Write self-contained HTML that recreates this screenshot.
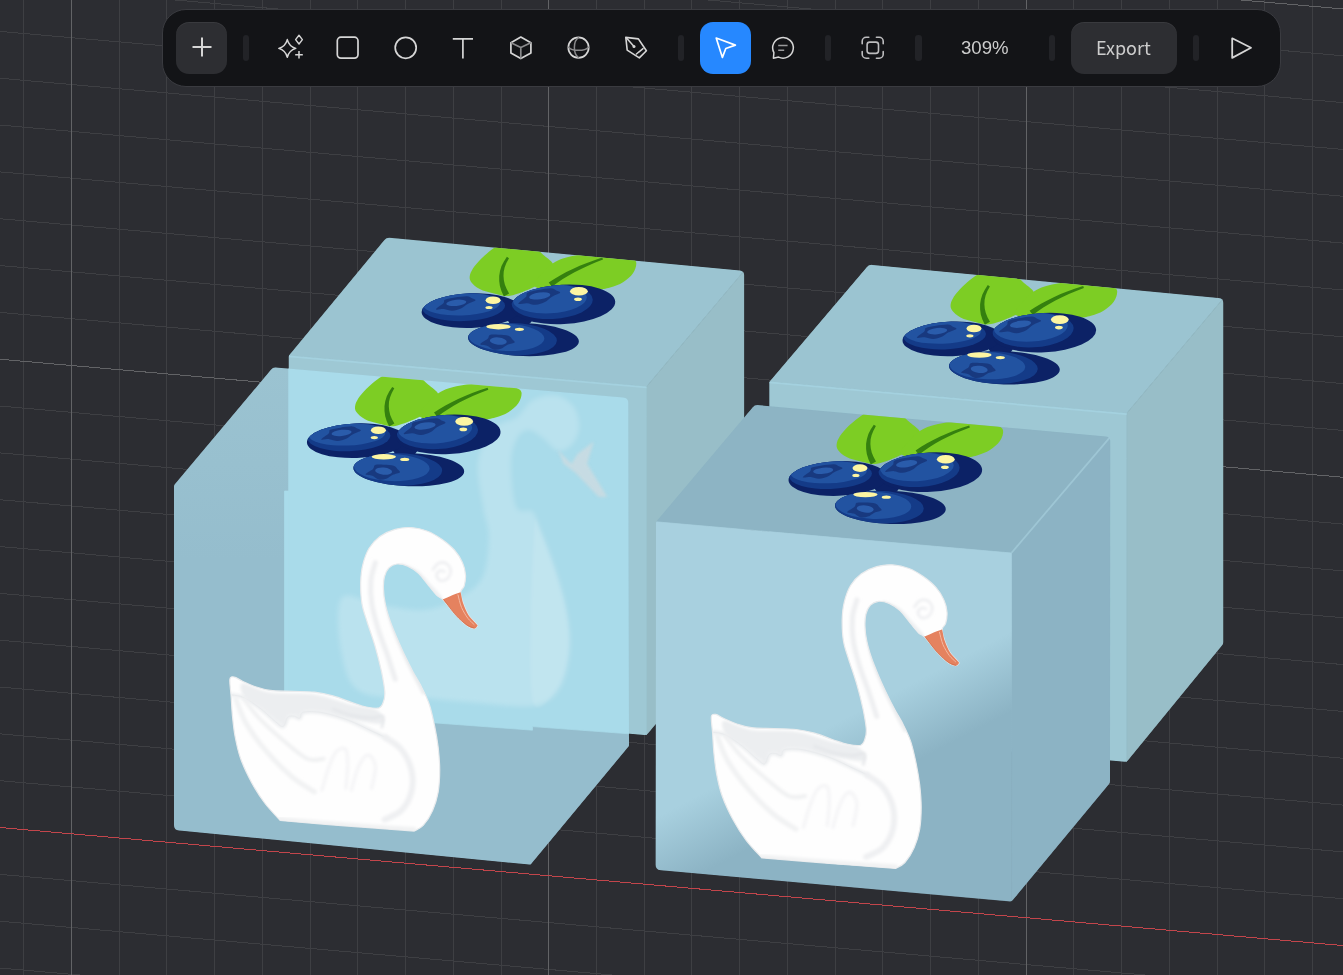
<!DOCTYPE html>
<html><head><meta charset="utf-8"><title>Spline</title>
<style>
html,body{margin:0;padding:0;background:#2c2d32;overflow:hidden}
body{width:1343px;height:975px;position:relative;font-family:"Liberation Sans","Noto Sans CJK SC",sans-serif}
#bg{position:absolute;left:0;top:0;display:block}
#tb{position:absolute;left:162px;top:9px;width:1117px;height:76px;background:#131417;border:1px solid #3a3b40;border-radius:24px}
#tb .btn{position:absolute;top:12px;height:52px;border-radius:13px;background:#2d2e32;box-shadow:inset 0 1px 0 rgba(255,255,255,.06)}
#tb .dv{position:absolute;top:25px;width:6px;height:26px;border-radius:3px;background:#222327}
#tb svg{position:absolute;left:-163px;top:-10px;overflow:visible}
#tb .txt{position:absolute;will-change:transform;color:#cdcdcd;white-space:nowrap;line-height:20px}
</style></head><body>
<svg id="bg" width="1343" height="975" viewBox="0 0 1343 975">
<rect width="1343" height="975" fill="#2c2d32"/>
<g stroke="#3e3f43" stroke-width="1" fill="none" shape-rendering="crispEdges"><path d="M23.77 0V975"/><path d="M119.23 0V975"/><path d="M166.96 0V975"/><path d="M214.69 0V975"/><path d="M262.42 0V975"/><path d="M310.15 0V975"/><path d="M357.88 0V975"/><path d="M405.61 0V975"/><path d="M453.34 0V975"/><path d="M501.07 0V975"/><path d="M596.53 0V975"/><path d="M644.26 0V975"/><path d="M691.99 0V975"/><path d="M739.72 0V975"/><path d="M787.45 0V975"/><path d="M835.18 0V975"/><path d="M882.91 0V975"/><path d="M930.64 0V975"/><path d="M978.37 0V975"/><path d="M1073.83 0V975"/><path d="M1121.56 0V975"/><path d="M1169.29 0V975"/><path d="M1217.02 0V975"/><path d="M1264.75 0V975"/><path d="M1312.48 0V975"/><path d="M0 -202.74L1343 -84.70"/><path d="M0 -155.91L1343 -37.87"/><path d="M0 -62.25L1343 55.79"/><path d="M0 -15.42L1343 102.62"/><path d="M0 31.41L1343 149.45"/><path d="M0 78.24L1343 196.28"/><path d="M0 125.07L1343 243.11"/><path d="M0 171.90L1343 289.94"/><path d="M0 218.73L1343 336.77"/><path d="M0 265.56L1343 383.60"/><path d="M0 312.39L1343 430.43"/><path d="M0 406.05L1343 524.09"/><path d="M0 452.88L1343 570.92"/><path d="M0 499.71L1343 617.75"/><path d="M0 546.54L1343 664.58"/><path d="M0 593.37L1343 711.41"/><path d="M0 640.20L1343 758.24"/><path d="M0 687.03L1343 805.07"/><path d="M0 733.86L1343 851.90"/><path d="M0 780.69L1343 898.73"/><path d="M0 874.35L1343 992.39"/><path d="M0 921.18L1343 1039.22"/><path d="M0 968.01L1343 1086.05"/><path d="M0 1014.84L1343 1132.88"/><path d="M0 1061.67L1343 1179.71"/></g><g stroke="#626366" stroke-width="1" fill="none" shape-rendering="crispEdges"><path d="M71.50 0V975"/><path d="M548.80 0V975"/><path d="M1026.10 0V975"/><path d="M0 -109.08L1343 8.96"/><path d="M0 359.22L1343 477.26"/></g><path d="M0 827.52L1343 945.56" stroke="#c2454b" stroke-width="1" fill="none" shape-rendering="crispEdges"/>
<defs>
<linearGradient id="gfr" gradientUnits="userSpaceOnUse" x1="817" y1="733" x2="850" y2="796">
<stop offset="0" stop-color="#a8d0df"/><stop offset="1" stop-color="#8cb3c4"/></linearGradient>
</defs>
<clipPath id="cBL"><path d="M288.7 357.2Q288.7 355.7 289.7 354.5L384.3 240.1Q386.5 237.4 390.0 237.7L739.7 270.4Q744.2 270.8 744.2 275.3L744.2 616.0Q744.2 618.0 742.9 619.5L647.8 733.8Q646.5 735.3 644.5 735.1L293.7 704.4Q288.7 704.0 288.7 699.0Z"/></clipPath><g clip-path="url(#cBL)"><polygon points="288.7,355.7 386.5,237.4 744.2,270.8 646.5,386.7" fill="#9bc4d1" stroke="#9bc4d1" stroke-width="0.7" stroke-linejoin="round" /><polygon points="646.5,386.7 744.2,270.8 744.2,618.0 646.5,735.3" fill="#98bec8" stroke="#98bec8" stroke-width="0.7" stroke-linejoin="round" /><polygon points="288.7,355.7 646.5,386.7 646.5,735.3 288.7,704.0" fill="#9ec8d4" stroke="#9ec8d4" stroke-width="0.7" stroke-linejoin="round" /><path d="M288.7 356.3L646.5 387.3" stroke="#a4d1df" stroke-width="1.8" fill="none"/></g>
<clipPath id="cBR"><path d="M769.3 383.3Q769.3 381.8 770.3 380.7L866.7 267.3Q869.0 264.6 872.5 264.9L1218.8 298.1Q1223.3 298.5 1223.3 303.0L1223.3 642.0Q1223.3 644.0 1222.0 645.5L1127.9 760.5Q1126.6 762.0 1124.6 761.8L774.3 730.4Q769.3 730.0 769.3 725.0Z"/></clipPath><g clip-path="url(#cBR)"><polygon points="769.3,381.8 869.0,264.6 1223.3,298.5 1126.6,413.5" fill="#9bc4d1" stroke="#9bc4d1" stroke-width="0.7" stroke-linejoin="round" /><polygon points="1126.6,413.5 1223.3,298.5 1223.3,644.0 1126.6,762.0" fill="#98bec8" stroke="#98bec8" stroke-width="0.7" stroke-linejoin="round" /><polygon points="769.3,381.8 1126.6,413.5 1126.6,762.0 769.3,730.0" fill="#9ec8d4" stroke="#9ec8d4" stroke-width="0.7" stroke-linejoin="round" /><path d="M769.3 382.4L1126.6 414.1" stroke="#a4d1df" stroke-width="1.8" fill="none"/></g>
<clipPath id="cFR"><path d="M656.0 523.3Q656.0 521.8 657.0 520.7L752.5 407.5Q754.8 404.8 758.3 405.1L1105.8 436.4Q1110.3 436.8 1110.3 441.3L1110.0 781.0Q1110.0 783.0 1108.7 784.5L1012.9 900.1Q1011.6 901.6 1009.6 901.4L660.6 870.2Q655.6 869.8 655.6 864.8Z"/></clipPath><g clip-path="url(#cFR)"><polygon points="656.0,521.8 754.8,404.8 1110.3,436.8 1011.4,553.0" fill="#8db4c4" stroke="#8db4c4" stroke-width="0.7" stroke-linejoin="round" /><polygon points="1011.4,553.0 1110.3,436.8 1110.0,783.0 1011.6,901.6" fill="#8cb3c4" stroke="#8cb3c4" stroke-width="0.7" stroke-linejoin="round" /><polygon points="656.0,521.8 1011.4,553.0 1011.6,901.6 655.6,869.8" fill="url(#gfr)" stroke="url(#gfr)" stroke-width="0.7" stroke-linejoin="round" /></g>
<clipPath id="cFL"><path d="M174.0 486.5Q174.0 485.0 175.0 483.9L271.1 369.6Q273.0 367.3 276.0 367.6L623.3 397.4Q628.3 397.8 628.3 402.8L629.0 745.0Q629.0 746.0 628.4 746.8L531.1 863.9Q530.5 864.7 529.5 864.6L179.0 830.5Q174.0 830.0 174.0 825.0Z"/></clipPath>
<g clip-path="url(#cFL)">
<linearGradient id="gfl" gradientUnits="userSpaceOnUse" x1="0" y1="368" x2="0" y2="560"><stop offset="0" stop-color="#9bc3d1"/><stop offset="1" stop-color="#95bdcd"/></linearGradient>
<polygon points="174.0,485.0 273.0,367.3 628.3,397.8 629.0,746.0 530.5,864.7 174.0,830.0" fill="url(#gfl)" stroke="url(#gfl)" stroke-width="0.7" stroke-linejoin="round" />
<polygon points="288.7,340.0 660.0,340.0 660.0,736.5 646.5,735.3 629.0,733.8 532.5,726.6 532.5,730.2 288.7,712.0" fill="#a9dbea" stroke="#a9dbea" stroke-width="0.7" stroke-linejoin="round" />
<polygon points="284.5,491.0 289.0,491.0 289.0,712.0 284.5,711.7" fill="#a9dbea" stroke="#a9dbea" stroke-width="0.7" stroke-linejoin="round" />
</g>
<defs><g id="bb"><path d="M510.1 295.8C503.2 296.9 499.1 294.7 494.0 293.6C488.9 292.5 483.5 291.1 479.7 289.1C475.9 287.2 472.7 284.4 471.1 282.0C469.5 279.6 469.4 277.5 470.0 274.8C470.6 272.2 472.4 269.0 474.7 265.9C477.0 262.8 480.4 259.4 483.6 256.4C486.8 253.5 490.5 250.3 494.0 248.0C497.5 245.7 500.5 243.8 504.7 242.7C508.9 241.6 514.2 240.8 519.0 241.4C523.8 242.0 529.3 244.1 533.3 246.3C537.3 248.5 539.9 251.7 543.1 254.7C546.4 257.6 551.6 260.6 553.0 264.1C554.3 267.6 554.2 272.0 551.2 275.7C548.2 279.5 541.9 283.1 535.1 286.5C528.2 289.8 516.9 294.6 510.1 295.8Z" fill="#7dcd24"/><path d="M535.1 286.8C530.5 283.5 540.2 276.1 543.1 272.2C546.1 268.2 549.5 265.6 553.0 263.2C556.4 260.9 559.2 259.7 563.7 258.2C568.1 256.8 573.8 255.5 579.8 254.7C585.7 253.8 593.2 253.0 599.4 252.9C605.7 252.7 612.2 253.2 617.3 253.9C622.4 254.7 627.0 256.1 630.2 257.5C633.3 258.9 635.8 259.9 636.2 262.5C636.7 265.1 635.2 270.0 633.0 273.2C630.8 276.5 626.8 279.8 623.0 282.2C619.2 284.6 614.7 286.2 610.1 287.5C605.6 288.8 602.4 289.3 595.8 290.0C589.3 290.8 581.0 292.4 570.8 291.8C560.7 291.3 539.7 290.1 535.1 286.8Z" fill="#7dcd24"/><path d="M506.9 256.8L503.9 261.4L501.5 266.1L500.0 271.0L499.2 275.9L499.2 281.0L499.9 286.1L501.5 291.3L503.9 296.5L509.1 293.5L506.7 289.1L504.9 284.8L503.9 280.4L503.5 276.1L503.7 271.7L504.7 267.3L506.5 262.8L509.0 258.2 Z" fill="#35800f"/><path d="M602.3 257.6L594.4 260.2L586.9 262.9L579.7 265.8L572.8 268.9L566.3 272.1L560.1 275.4L554.2 278.9L548.7 282.5L551.9 286.8L557.0 283.0L562.4 279.3L568.3 275.7L574.5 272.2L581.1 268.9L588.0 265.7L595.3 262.6L603.0 259.6 Z" fill="#35800f"/><ellipse cx="519.9" cy="318.6" rx="12.5" ry="8.0" fill="#0c2266" /><clipPath id="bc1"><ellipse cx="471.1" cy="310.6" rx="49.5" ry="17.3" fill="#0c2266" transform="rotate(-2 471.1 310.6)" /></clipPath><ellipse cx="471.1" cy="310.6" rx="49.5" ry="17.3" fill="#0c2266" transform="rotate(-2 471.1 310.6)" /><g clip-path="url(#bc1)"><ellipse cx="463.6" cy="307.0" rx="41.5" ry="14.1" fill="#143b88" transform="rotate(-2 463.6 307.0)" /><ellipse cx="461.8" cy="304.3" rx="38.2" ry="11.1" fill="#2253a1" transform="rotate(-2 461.8 304.3)" /></g><g transform="rotate(-6 455.6 304.0)"><path d="M435.5 307.2C435.5 306.2 441.8 303.5 443.5 302.0C445.2 300.6 443.5 299.3 445.5 298.6C447.5 297.8 451.9 297.7 455.6 297.5C459.3 297.4 464.8 297.1 467.6 297.5C470.4 298.0 471.1 299.3 472.5 300.1C473.8 301.0 476.5 301.8 475.7 302.7C474.9 303.5 470.2 304.2 467.6 305.3C465.1 306.3 463.1 308.3 460.4 309.1C457.7 310.0 454.4 310.6 451.5 310.4C448.7 310.2 446.2 308.4 443.5 307.8C440.8 307.3 435.5 308.2 435.5 307.2Z" fill="#17367b" opacity="0.9"/><ellipse cx="456.4" cy="302.9" rx="10.1" ry="3.1" fill="#2a5cab"/></g><ellipse cx="493.1" cy="300.2" rx="7.5" ry="3.8" fill="#fdf5a2" /><ellipse cx="489.0" cy="307.5" rx="3.6" ry="1.6" fill="#fdf5a2" /><clipPath id="bc2"><ellipse cx="563.1" cy="304.3" rx="52.2" ry="19.7" fill="#0c2266" transform="rotate(-3 563.1 304.3)" /></clipPath><ellipse cx="563.1" cy="304.3" rx="52.2" ry="19.7" fill="#0c2266" transform="rotate(-3 563.1 304.3)" /><g clip-path="url(#bc2)"><ellipse cx="552.1" cy="301.7" rx="40.7" ry="17.3" fill="#143b88" transform="rotate(-3 552.1 301.7)" /><ellipse cx="549.9" cy="299.0" rx="37.0" ry="14.3" fill="#2253a1" transform="rotate(-3 549.9 299.0)" /></g><g transform="rotate(-8 539.0 297.2)"><path d="M517.6 300.8C517.6 299.7 524.4 296.6 526.2 295.0C527.9 293.4 526.2 292.0 528.3 291.2C530.4 290.3 535.1 290.2 539.0 290.0C543.0 289.8 548.9 289.6 551.9 290.0C554.9 290.5 555.6 291.9 557.0 292.9C558.5 293.8 561.3 294.8 560.5 295.8C559.6 296.7 554.6 297.4 551.9 298.6C549.2 299.8 547.0 301.9 544.2 302.9C541.3 303.9 537.7 304.6 534.7 304.3C531.7 304.1 529.0 302.1 526.2 301.5C523.3 300.9 517.6 301.8 517.6 300.8Z" fill="#17367b" opacity="0.9"/><ellipse cx="539.9" cy="296.0" rx="10.7" ry="3.4" fill="#2a5cab"/></g><ellipse cx="578.9" cy="291.3" rx="8.9" ry="4.3" fill="#fdf5a2" /><ellipse cx="578.0" cy="299.3" rx="3.9" ry="1.8" fill="#fdf5a2" /><clipPath id="bc3"><ellipse cx="523.5" cy="339.5" rx="55.4" ry="16.6" fill="#0c2266" transform="rotate(2 523.5 339.5)" /></clipPath><ellipse cx="523.5" cy="339.5" rx="55.4" ry="16.6" fill="#0c2266" transform="rotate(2 523.5 339.5)" /><g clip-path="url(#bc3)"><ellipse cx="512.2" cy="339.2" rx="44.7" ry="16.3" fill="#143b88" transform="rotate(2 512.2 339.2)" /><ellipse cx="506.5" cy="337.4" rx="37.9" ry="13.6" fill="#2253a1" transform="rotate(2 506.5 337.4)" /></g><g transform="rotate(6 497.6 342.2)"><path d="M480.6 346.0C480.6 344.9 486.0 341.6 487.4 339.9C488.8 338.2 487.4 336.7 489.1 335.8C490.8 335.0 494.5 334.8 497.6 334.6C500.7 334.4 505.4 334.1 507.7 334.6C510.1 335.1 510.7 336.6 511.8 337.7C513.0 338.7 515.2 339.7 514.5 340.7C513.9 341.7 509.9 342.5 507.7 343.7C505.6 345.0 503.9 347.3 501.6 348.3C499.4 349.3 496.5 350.1 494.2 349.8C491.8 349.6 489.6 347.4 487.4 346.8C485.1 346.1 480.6 347.2 480.6 346.0Z" fill="#17367b" opacity="0.9"/><ellipse cx="498.2" cy="341.0" rx="8.5" ry="3.6" fill="#2a5cab"/></g><ellipse cx="498.5" cy="326.7" rx="12.2" ry="2.7" fill="#fdf5a2" /><ellipse cx="519.4" cy="329.3" rx="4.6" ry="1.6" fill="#fdf5a2" /></g></defs>
<clipPath id="tBL"><polygon points="288.7,355.7 386.5,237.4 744.2,270.8 646.5,386.7"/></clipPath>
<g clip-path="url(#tBL)"><use href="#bb" x="0.0" y="0.0"/></g>
<clipPath id="tBR"><polygon points="769.3,381.8 869.0,264.6 1223.3,298.5 1126.6,413.5"/></clipPath>
<g clip-path="url(#tBR)"><use href="#bb" x="480.9" y="28.3"/></g>
<clipPath id="tFR"><polygon points="656.0,521.8 754.8,404.8 1110.3,436.8 1011.4,553.0"/></clipPath>
<g clip-path="url(#tFR)"><use href="#bb" x="366.9" y="167.9"/></g>
<defs><filter id="sb" x="-20%" y="-20%" width="140%" height="140%"><feGaussianBlur stdDeviation="1.6"/></filter><filter id="gb" x="-10%" y="-10%" width="120%" height="120%"><feGaussianBlur stdDeviation="2.5"/></filter><g id="swan"><path d="M711.4 716.6C712.0 713.5 713.6 714.1 715.7 714.4C717.8 714.7 720.5 716.9 724.0 718.5C727.5 720.1 732.3 722.5 736.9 724.0C741.5 725.5 745.5 726.9 751.7 727.7C757.8 728.5 766.5 728.3 773.8 728.6C781.2 728.9 789.2 728.8 796.0 729.5C802.8 730.3 808.3 731.5 814.5 733.2C820.6 734.9 827.4 737.8 832.9 739.7C838.5 741.5 843.1 743.4 847.7 744.3C852.3 745.2 857.7 746.1 860.6 745.2C863.5 744.2 864.1 741.5 865.0 738.8C866.0 736.1 866.6 733.8 866.3 728.9C865.9 724.0 864.6 716.6 863.1 709.2C861.5 701.8 859.3 692.8 856.9 684.6C854.6 676.4 851.2 667.2 848.9 660.0C846.7 652.8 844.6 647.9 843.5 641.1C842.3 634.4 842.1 626.2 842.2 619.6C842.4 613.0 842.9 607.3 844.4 601.7C845.8 596.0 847.8 590.1 850.6 585.5C853.5 580.9 857.1 577.0 861.4 573.8C865.7 570.7 871.4 568.2 876.7 566.7C881.9 565.2 887.4 564.6 892.8 564.9C898.2 565.2 903.9 566.5 909.0 568.5C914.0 570.4 918.8 573.4 923.3 576.5C927.8 579.7 932.4 583.4 935.9 587.3C939.3 591.2 942.1 595.7 943.9 599.9C945.8 604.0 946.7 608.5 947.0 612.4C947.3 616.3 946.5 620.3 945.7 623.2C944.9 626.0 942.3 626.5 942.1 629.5C942.0 632.5 943.5 637.2 944.8 641.1C946.2 645.0 948.0 649.4 950.2 652.8C952.5 656.2 956.9 659.9 958.3 661.8C959.7 663.6 958.9 663.1 958.5 663.7C958.0 664.4 957.3 665.9 955.6 665.7C953.9 665.5 951.4 664.8 948.4 662.7C945.4 660.5 940.8 656.1 937.7 652.8C934.5 649.5 931.8 645.6 929.6 642.9C927.3 640.2 926.1 638.4 924.2 636.6C922.3 634.8 920.5 634.7 917.9 632.2C915.4 629.6 911.9 625.0 909.0 621.4C906.0 617.8 903.3 613.6 900.0 610.6C896.7 607.6 892.8 605.0 889.2 603.4C885.6 601.9 881.6 601.0 878.4 601.3C875.3 601.6 872.5 603.1 870.4 605.2C868.3 607.4 866.8 610.6 865.9 614.2C865.0 617.8 864.8 622.3 865.0 626.8C865.1 631.3 865.7 636.0 866.8 641.1C867.8 646.2 869.5 651.9 871.3 657.3C873.1 662.7 875.2 667.7 877.6 673.4C879.9 679.1 882.8 685.4 885.6 691.4C888.5 697.4 891.9 704.2 894.6 709.3C897.3 714.4 899.1 716.7 901.8 721.9C904.4 727.1 908.1 733.8 910.4 740.6C912.8 747.4 914.4 755.4 916.0 762.8C917.5 770.1 918.8 777.5 919.7 784.9C920.5 792.3 921.2 799.7 921.2 807.1C921.2 814.5 920.8 822.5 919.7 829.2C918.5 836.0 916.6 842.1 914.1 847.7C911.7 853.2 908.0 859.0 904.9 862.5C901.8 865.9 897.2 867.4 895.7 868.4C884.6 867.5 851.5 865.1 829.2 863.4C806.9 861.6 773.1 858.8 761.8 857.8C759.2 854.9 750.9 846.6 746.2 840.3C741.4 834.0 737.2 827.4 733.2 820.0C729.2 812.6 724.9 803.7 722.2 796.0C719.4 788.3 718.0 781.2 716.6 773.8C715.2 766.5 714.5 758.5 713.8 751.7C713.2 744.9 713.0 739.1 712.6 733.2C712.2 727.4 710.9 719.8 711.4 716.6Z" fill="#fefefe" stroke="#e9ebed" stroke-width="1.2"/><clipPath id="swc"><path d="M711.4 716.6C712.0 713.5 713.6 714.1 715.7 714.4C717.8 714.7 720.5 716.9 724.0 718.5C727.5 720.1 732.3 722.5 736.9 724.0C741.5 725.5 745.5 726.9 751.7 727.7C757.8 728.5 766.5 728.3 773.8 728.6C781.2 728.9 789.2 728.8 796.0 729.5C802.8 730.3 808.3 731.5 814.5 733.2C820.6 734.9 827.4 737.8 832.9 739.7C838.5 741.5 843.1 743.4 847.7 744.3C852.3 745.2 857.7 746.1 860.6 745.2C863.5 744.2 864.1 741.5 865.0 738.8C866.0 736.1 866.6 733.8 866.3 728.9C865.9 724.0 864.6 716.6 863.1 709.2C861.5 701.8 859.3 692.8 856.9 684.6C854.6 676.4 851.2 667.2 848.9 660.0C846.7 652.8 844.6 647.9 843.5 641.1C842.3 634.4 842.1 626.2 842.2 619.6C842.4 613.0 842.9 607.3 844.4 601.7C845.8 596.0 847.8 590.1 850.6 585.5C853.5 580.9 857.1 577.0 861.4 573.8C865.7 570.7 871.4 568.2 876.7 566.7C881.9 565.2 887.4 564.6 892.8 564.9C898.2 565.2 903.9 566.5 909.0 568.5C914.0 570.4 918.8 573.4 923.3 576.5C927.8 579.7 932.4 583.4 935.9 587.3C939.3 591.2 942.1 595.7 943.9 599.9C945.8 604.0 946.7 608.5 947.0 612.4C947.3 616.3 946.5 620.3 945.7 623.2C944.9 626.0 942.3 626.5 942.1 629.5C942.0 632.5 943.5 637.2 944.8 641.1C946.2 645.0 948.0 649.4 950.2 652.8C952.5 656.2 956.9 659.9 958.3 661.8C959.7 663.6 958.9 663.1 958.5 663.7C958.0 664.4 957.3 665.9 955.6 665.7C953.9 665.5 951.4 664.8 948.4 662.7C945.4 660.5 940.8 656.1 937.7 652.8C934.5 649.5 931.8 645.6 929.6 642.9C927.3 640.2 926.1 638.4 924.2 636.6C922.3 634.8 920.5 634.7 917.9 632.2C915.4 629.6 911.9 625.0 909.0 621.4C906.0 617.8 903.3 613.6 900.0 610.6C896.7 607.6 892.8 605.0 889.2 603.4C885.6 601.9 881.6 601.0 878.4 601.3C875.3 601.6 872.5 603.1 870.4 605.2C868.3 607.4 866.8 610.6 865.9 614.2C865.0 617.8 864.8 622.3 865.0 626.8C865.1 631.3 865.7 636.0 866.8 641.1C867.8 646.2 869.5 651.9 871.3 657.3C873.1 662.7 875.2 667.7 877.6 673.4C879.9 679.1 882.8 685.4 885.6 691.4C888.5 697.4 891.9 704.2 894.6 709.3C897.3 714.4 899.1 716.7 901.8 721.9C904.4 727.1 908.1 733.8 910.4 740.6C912.8 747.4 914.4 755.4 916.0 762.8C917.5 770.1 918.8 777.5 919.7 784.9C920.5 792.3 921.2 799.7 921.2 807.1C921.2 814.5 920.8 822.5 919.7 829.2C918.5 836.0 916.6 842.1 914.1 847.7C911.7 853.2 908.0 859.0 904.9 862.5C901.8 865.9 897.2 867.4 895.7 868.4C884.6 867.5 851.5 865.1 829.2 863.4C806.9 861.6 773.1 858.8 761.8 857.8C759.2 854.9 750.9 846.6 746.2 840.3C741.4 834.0 737.2 827.4 733.2 820.0C729.2 812.6 724.9 803.7 722.2 796.0C719.4 788.3 718.0 781.2 716.6 773.8C715.2 766.5 714.5 758.5 713.8 751.7C713.2 744.9 713.0 739.1 712.6 733.2C712.2 727.4 710.9 719.8 711.4 716.6Z"/></clipPath><g clip-path="url(#swc)"><path d="M905.4 730.0C904.2 727.7 900.9 721.7 898.2 716.5C895.5 711.3 892.1 704.5 889.2 698.5C886.4 692.6 883.5 686.3 881.1 680.6C878.7 674.9 876.7 669.8 874.9 664.5C873.1 659.1 871.5 653.7 870.4 648.3C869.2 642.9 868.4 637.2 868.0 632.2C867.7 627.1 867.4 621.8 868.0 617.8C868.6 613.8 871.0 609.6 871.6 607.9" fill="none" stroke="#e9ebed" stroke-width="4" stroke-linecap="round" stroke-linejoin="round" filter="url(#sb)"/><path d="M856.9 599.9C856.2 602.8 853.0 610.9 852.4 617.8C851.8 624.7 852.1 633.1 853.3 641.1C854.5 649.2 857.1 657.9 859.6 666.3C862.1 674.6 865.7 683.0 868.6 691.4C871.4 699.7 875.3 712.3 876.7 716.5" fill="none" stroke="#eeeff1" stroke-width="5" stroke-linecap="round" stroke-linejoin="round" filter="url(#sb)"/><path d="M914.3 607.0C915.2 606.0 917.5 601.8 919.7 600.8C922.0 599.7 925.7 599.6 927.8 600.8C929.9 602.0 932.1 605.4 932.3 607.9C932.4 610.5 930.5 614.4 928.7 616.0C926.9 617.7 923.3 618.4 921.5 617.8C919.7 617.2 917.9 614.1 917.9 612.4C917.9 610.8 920.2 608.5 921.5 607.9C922.9 607.3 925.3 608.7 926.0 608.8" fill="none" stroke="#eaebee" stroke-width="2.2" stroke-linecap="round" stroke-linejoin="round" filter="url(#sb)"/><path d="M883.8 603.1C886.2 604.2 893.7 606.4 898.2 609.7C902.7 613.1 906.9 619.0 910.7 623.2C914.6 627.4 919.7 632.9 921.5 634.8" fill="none" stroke="#eceef0" stroke-width="4" stroke-linecap="round" stroke-linejoin="round" filter="url(#sb)"/><path d="M724.0 720.7C728.3 719.9 739.7 728.1 751.7 729.9C763.7 731.8 782.5 729.7 796.0 731.8C809.5 733.8 822.5 739.4 832.9 742.1C843.4 744.7 853.7 744.5 858.8 747.6C863.8 750.8 868.3 759.6 863.4 760.9C858.5 762.3 839.2 757.8 829.2 755.8C819.2 753.7 810.8 749.9 803.4 748.7C796.0 747.6 788.6 747.8 784.9 748.7C781.2 749.7 782.8 753.7 781.2 754.3C779.7 754.9 777.7 752.6 775.7 752.4C773.7 752.3 771.1 751.9 769.2 753.5C767.4 755.2 769.1 763.7 764.6 762.4C760.2 761.1 748.9 750.2 742.5 745.6C736.0 741.0 728.9 738.7 725.8 734.5C722.8 730.4 719.7 721.4 724.0 720.7Z" fill="#eceef0" stroke="none" stroke-width="0" stroke-linecap="round" stroke-linejoin="round" filter="url(#sb)"/><path d="M713.8 732.3C715.8 732.8 721.1 732.8 725.8 735.1C730.6 737.4 737.2 742.2 742.5 746.2C747.7 750.2 753.5 756.2 757.2 759.1C760.9 762.0 762.6 764.5 764.6 763.7C766.6 762.9 767.4 756.2 769.2 754.5C771.1 752.8 773.7 753.4 775.7 753.5C777.7 753.7 779.7 756.1 781.2 755.4C782.8 754.7 781.2 750.4 784.9 749.5C788.6 748.6 796.0 748.6 803.4 749.8C810.8 751.1 820.9 754.2 829.2 757.2C837.5 760.3 846.9 765.4 853.2 768.3C859.5 771.2 864.8 773.7 867.1 774.8" fill="none" stroke="#d6d9dc" stroke-width="0.9" stroke-linecap="round" stroke-linejoin="round"/><path d="M713.8 732.3C715.8 732.8 721.1 732.8 725.8 735.1C730.6 737.4 737.2 742.2 742.5 746.2C747.7 750.2 753.5 756.2 757.2 759.1C760.9 762.0 762.6 764.5 764.6 763.7C766.6 762.9 767.4 756.2 769.2 754.5C771.1 752.8 773.7 753.4 775.7 753.5C777.7 753.7 779.7 756.1 781.2 755.4C782.8 754.7 781.2 750.4 784.9 749.5C788.6 748.6 796.0 748.6 803.4 749.8C810.8 751.1 820.9 754.2 829.2 757.2C837.5 760.3 846.9 765.4 853.2 768.3C859.5 771.2 864.8 773.7 867.1 774.8" fill="none" stroke="#eceef0" stroke-width="4" stroke-linecap="round" stroke-linejoin="round" filter="url(#sb)"/><path d="M814.5 746.2C817.5 747.2 826.5 751.1 832.9 752.6C839.4 754.2 848.0 755.2 853.2 755.4C858.5 755.5 862.6 752.0 864.3 753.5C866.0 755.1 863.5 762.8 863.4 764.6" fill="none" stroke="#e4e6e9" stroke-width="2.5" stroke-linecap="round" stroke-linejoin="round" filter="url(#sb)"/><path d="M867.1 774.8C869.7 776.8 878.5 781.4 882.8 786.8C887.1 792.1 891.2 800.0 892.9 807.1C894.6 814.1 894.6 822.5 892.9 829.2C891.2 836.0 887.2 843.1 882.8 847.7C878.3 852.3 868.9 855.4 866.1 856.9" fill="none" stroke="#eff0f2" stroke-width="6" stroke-linecap="round" stroke-linejoin="round" filter="url(#sb)"/><path d="M717.5 736.9C719.2 740.9 722.6 752.3 727.7 760.9C732.8 769.5 740.3 779.7 748.0 788.6C755.7 797.5 765.8 807.7 773.8 814.5C781.8 821.2 792.3 826.8 796.0 829.2" fill="none" stroke="#f1f2f3" stroke-width="5" stroke-linecap="round" stroke-linejoin="round" filter="url(#sb)"/><path d="M725.8 736.9C728.3 740.0 734.2 748.6 740.6 755.4C747.1 762.2 756.6 770.8 764.6 777.5C772.6 784.3 781.8 792.9 788.6 796.0C795.4 799.1 802.5 796.0 805.2 796.0" fill="none" stroke="#f0f1f2" stroke-width="4" stroke-linecap="round" stroke-linejoin="round" filter="url(#sb)"/><path d="M803.4 827.4C804.6 823.4 808.3 809.8 810.8 803.4C813.2 796.9 815.4 791.4 818.1 788.6C820.9 785.8 825.5 784.3 827.4 786.8C829.2 789.2 829.2 796.9 829.2 803.4C829.2 809.8 827.7 821.8 827.4 825.5" fill="none" stroke="#f5f5f7" stroke-width="3.5" stroke-linecap="round" stroke-linejoin="round" filter="url(#sb)"/><path d="M832.9 827.4C834.1 823.4 837.5 809.2 840.3 803.4C843.1 797.5 846.8 792.3 849.5 792.3C852.3 792.3 856.3 797.8 856.9 803.4C857.5 808.9 853.8 821.8 853.2 825.5" fill="none" stroke="#f5f5f7" stroke-width="3.5" stroke-linecap="round" stroke-linejoin="round" filter="url(#sb)"/><path d="M760.9 856.9C772.3 857.8 806.8 860.8 829.2 862.5C851.7 864.1 884.6 866.3 895.7 867.1" fill="none" stroke="#f0f1f2" stroke-width="5" stroke-linecap="round" stroke-linejoin="round" filter="url(#sb)"/></g><path d="M942.1 629.5C942.6 631.4 943.5 637.2 944.8 641.1C946.2 645.0 948.0 649.4 950.2 652.8C952.5 656.2 956.9 659.9 958.3 661.8C959.7 663.6 958.9 663.1 958.5 663.7C958.0 664.4 957.3 665.9 955.6 665.7C953.9 665.5 951.4 664.8 948.4 662.7C945.4 660.5 940.8 656.1 937.7 652.8C934.5 649.5 931.8 645.6 929.6 642.9C927.3 640.2 925.1 637.7 924.2 636.6C925.3 636.2 928.4 634.8 930.5 634.0C932.6 633.1 934.8 632.0 936.8 631.3C938.7 630.5 941.3 629.8 942.1 629.5Z" fill="#e5825f"/><path d="M939.5 632.2C940.1 634.3 941.4 640.8 943.0 644.7C944.7 648.6 947.2 652.6 949.3 655.5C951.4 658.3 954.6 660.7 955.6 661.8" fill="none" stroke="#f4b9a2" stroke-width="1" stroke-linecap="round"/><path d="M926.0 637.9C927.9 640.4 933.9 648.7 937.7 652.8C941.4 656.9 945.4 660.2 948.4 662.3C951.4 664.4 954.4 664.7 955.6 665.2" fill="none" stroke="#cf6e4d" stroke-width="0.8" stroke-linecap="round"/></g><path id="swsil" d="M711.4 716.6C712.0 713.5 713.6 714.1 715.7 714.4C717.8 714.7 720.5 716.9 724.0 718.5C727.5 720.1 732.3 722.5 736.9 724.0C741.5 725.5 745.5 726.9 751.7 727.7C757.8 728.5 766.5 728.3 773.8 728.6C781.2 728.9 789.2 728.8 796.0 729.5C802.8 730.3 808.3 731.5 814.5 733.2C820.6 734.9 827.4 737.8 832.9 739.7C838.5 741.5 843.1 743.4 847.7 744.3C852.3 745.2 857.7 746.1 860.6 745.2C863.5 744.2 864.1 741.5 865.0 738.8C866.0 736.1 866.6 733.8 866.3 728.9C865.9 724.0 864.6 716.6 863.1 709.2C861.5 701.8 859.3 692.8 856.9 684.6C854.6 676.4 851.2 667.2 848.9 660.0C846.7 652.8 844.6 647.9 843.5 641.1C842.3 634.4 842.1 626.2 842.2 619.6C842.4 613.0 842.9 607.3 844.4 601.7C845.8 596.0 847.8 590.1 850.6 585.5C853.5 580.9 857.1 577.0 861.4 573.8C865.7 570.7 871.4 568.2 876.7 566.7C881.9 565.2 887.4 564.6 892.8 564.9C898.2 565.2 903.9 566.5 909.0 568.5C914.0 570.4 918.8 573.4 923.3 576.5C927.8 579.7 932.4 583.4 935.9 587.3C939.3 591.2 942.1 595.7 943.9 599.9C945.8 604.0 946.7 608.5 947.0 612.4C947.3 616.3 946.5 620.3 945.7 623.2C944.9 626.0 942.3 626.5 942.1 629.5C942.0 632.5 943.5 637.2 944.8 641.1C946.2 645.0 948.0 649.4 950.2 652.8C952.5 656.2 956.9 659.9 958.3 661.8C959.7 663.6 958.9 663.1 958.5 663.7C958.0 664.4 957.3 665.9 955.6 665.7C953.9 665.5 951.4 664.8 948.4 662.7C945.4 660.5 940.8 656.1 937.7 652.8C934.5 649.5 931.8 645.6 929.6 642.9C927.3 640.2 926.1 638.4 924.2 636.6C922.3 634.8 920.5 634.7 917.9 632.2C915.4 629.6 911.9 625.0 909.0 621.4C906.0 617.8 903.3 613.6 900.0 610.6C896.7 607.6 892.8 605.0 889.2 603.4C885.6 601.9 881.6 601.0 878.4 601.3C875.3 601.6 872.5 603.1 870.4 605.2C868.3 607.4 866.8 610.6 865.9 614.2C865.0 617.8 864.8 622.3 865.0 626.8C865.1 631.3 865.7 636.0 866.8 641.1C867.8 646.2 869.5 651.9 871.3 657.3C873.1 662.7 875.2 667.7 877.6 673.4C879.9 679.1 882.8 685.4 885.6 691.4C888.5 697.4 891.9 704.2 894.6 709.3C897.3 714.4 899.1 716.7 901.8 721.9C904.4 727.1 908.1 733.8 910.4 740.6C912.8 747.4 914.4 755.4 916.0 762.8C917.5 770.1 918.8 777.5 919.7 784.9C920.5 792.3 921.2 799.7 921.2 807.1C921.2 814.5 920.8 822.5 919.7 829.2C918.5 836.0 916.6 842.1 914.1 847.7C911.7 853.2 908.0 859.0 904.9 862.5C901.8 865.9 897.2 867.4 895.7 868.4C884.6 867.5 851.5 865.1 829.2 863.4C806.9 861.6 773.1 858.8 761.8 857.8C759.2 854.9 750.9 846.6 746.2 840.3C741.4 834.0 737.2 827.4 733.2 820.0C729.2 812.6 724.9 803.7 722.2 796.0C719.4 788.3 718.0 781.2 716.6 773.8C715.2 766.5 714.5 758.5 713.8 751.7C713.2 744.9 713.0 739.1 712.6 733.2C712.2 727.4 710.9 719.8 711.4 716.6Z"/></defs>
<g clip-path="url(#cFL)"><path d="M517.0 417.0C523.5 412.3 526.1 403.8 532.6 400.3C539.1 396.7 549.1 394.6 555.9 395.6C562.8 396.6 569.6 401.3 573.5 406.5C577.4 411.7 579.5 420.5 579.3 426.8C579.1 433.1 575.9 440.3 572.3 444.3C568.7 448.4 562.7 451.9 557.9 451.0C553.1 450.0 548.3 442.0 543.5 438.5C538.6 435.0 533.1 429.9 528.7 429.9C524.2 429.9 519.9 432.8 517.0 438.5C514.0 444.1 511.2 452.4 511.1 463.8C511.0 475.2 512.9 498.9 516.2 506.7C519.4 514.5 527.5 509.3 530.6 510.6C533.7 511.9 534.2 513.9 534.9 514.5C538.3 523.3 549.7 550.6 555.2 567.1C560.6 583.7 565.2 599.6 567.6 613.9C570.1 628.2 571.4 640.2 570.0 652.9C568.6 665.6 565.2 681.1 559.1 689.9C553.0 698.8 546.8 703.8 533.3 705.9C519.8 708.1 496.3 704.2 478.0 702.8C459.6 701.4 442.9 699.6 423.4 697.7C403.9 695.9 374.7 699.4 361.0 691.9C347.4 684.4 344.8 668.5 341.5 652.9C338.3 637.3 335.7 606.4 341.5 598.3C347.4 590.2 363.0 602.2 376.6 604.2C390.3 606.1 409.7 611.0 423.4 610.0C437.0 609.0 448.6 603.8 458.5 598.3C468.4 592.8 477.6 587.3 482.7 576.9C487.7 566.5 488.8 547.3 488.9 535.9C489.0 524.6 485.3 521.0 483.4 508.7C481.6 496.3 476.3 475.2 478.0 461.9C479.7 448.6 487.1 436.2 493.6 428.7C500.1 421.3 510.5 421.8 517.0 417.0Z" fill="#ffffff" opacity="0.2" filter="url(#gb)"/><path d="M534.9 516.5C538.1 524.9 548.7 550.9 554.0 567.1C559.3 583.4 564.5 599.6 566.9 613.9C569.3 628.2 569.9 640.6 568.4 652.9C566.9 665.3 563.7 679.5 557.9 688.0C552.0 696.4 537.9 715.9 533.3 703.6C528.8 691.2 530.3 645.1 530.6 613.9C530.9 582.7 534.2 532.7 534.9 516.5Z" fill="#ffffff" opacity="0.1" filter="url(#sb)"/><path d="M557.9 450.2L571.5 463.8L577.4 454.1L593.8 441.6L587.1 463.8L607.4 497.0L598.8 497.0L575.4 472.8L563.7 463.8Z" fill="#d0dbe0" opacity="0.75" filter="url(#sb)"/></g>
<clipPath id="tFL"><polygon points="174.0,485.0 273.0,367.3 628.3,397.8 529.8,515.5"/></clipPath>
<g clip-path="url(#tFL)"><use href="#bb" x="-114.7" y="130.1"/></g>
<use href="#swan"/>
<use href="#swan" x="-481.5" y="-37.3"/>
<path d="M1011.4 553.0L1110.3 436.8" stroke="#a0c8d6" stroke-width="1.8" opacity="0.9" fill="none"/>
</svg>
<div id="tb">
<div class="btn" style="left:13px;width:51px"></div>
<div class="dv" style="left:80px"></div>
<div class="dv" style="left:515px"></div>
<div class="btn" style="left:537px;width:51px;background:#2688ff;box-shadow:none"></div>
<div class="dv" style="left:662px"></div>
<div class="dv" style="left:751.5px;width:7px"></div>
<div class="dv" style="left:886px"></div>
<div class="btn" style="left:908px;width:106px"></div>
<div class="dv" style="left:1030px"></div>
<div class="txt" style="left:798px;top:28px;font-size:18.6px;font-family:'Liberation Sans',sans-serif">309%</div>
<div class="txt" style="left:933.2px;top:27px;font-size:18px;font-family:'Noto Sans CJK SC','Liberation Sans',sans-serif">Export</div>
<svg width="1343" height="100" viewBox="0 0 1343 100" fill="none" stroke="#d6d6d6" stroke-width="1.7" stroke-linecap="round" stroke-linejoin="round">
<!-- plus -->
<path d="M192.5 47H211.5M202 37.5V56.5" stroke-width="2" stroke-linecap="butt"/>
<!-- sparkle -->
<path d="M287.3 39.6C288.6 44.6 290.6 46.9 295.8 48.4C290.6 49.9 288.6 52.2 287.3 57.2C286 52.2 284 49.9 278.8 48.4C284 46.9 286 44.6 287.3 39.6Z" stroke-width="1.5"/>
<path d="M299 35.3L302.4 39.6L299 44L295.6 39.6Z" stroke-width="1.4"/>
<path d="M295.2 54.7H302.8M299 50.9V58.5" stroke-width="1.5" stroke-linecap="butt"/>
<!-- square -->
<rect x="337.3" y="37.2" width="20.7" height="21" rx="3.6"/>
<!-- circle -->
<circle cx="405.7" cy="47.8" r="10.5"/>
<!-- T -->
<path d="M452.8 38.9H473M462.9 38.9V58.5" stroke-linecap="butt"/>
<!-- cube -->
<path d="M520.8 37L530.9 42.7V53L520.8 58.6L510.9 53V42.7Z"/>
<path d="M511.5 43L520.8 47.6L530.3 43M520.8 47.6V58" stroke="#8a8a8c"/>
<!-- globe -->
<circle cx="578.5" cy="47.6" r="10.2"/>
<path d="M578.5 37.6C573 41 573 54 578.5 57.6M568.6 47.2C572 51.4 585 51.4 588.4 47.2" stroke="#8a8a8c" stroke-width="1.5"/>
<!-- pen -->
<path d="M625.8 37.4L638.4 38.9L646.4 50.7L639.3 57.9L627.2 50.2Z" stroke-width="1.6"/>
<path d="M626.5 38L633.6 46M636.4 54L643 48.6" stroke-width="1.5"/>
<circle cx="634" cy="46.4" r="1.5" fill="#d6d6d6" stroke="none"/>
<!-- cursor -->
<path d="M716.2 38L735.4 45.1L725.8 48.5L722.4 57.4Z" stroke="#ffffff" stroke-width="1.7"/>
<!-- chat -->
<path d="M773.4 58.2L773.9 52.6A10.3 10.3 0 1 1 778.6 57.1Z" stroke-width="1.5"/>
<path d="M778.2 45.5H787.6M778.2 50.2H784.2" stroke="#9a9a9c" stroke-width="1.6" stroke-linecap="butt"/>
<!-- focus -->
<g stroke="#bdbdbf" stroke-width="1.6">
<path d="M862.2 43.8V41.3A4 4 0 0 1 866.2 37.3H868.8M876.4 37.3H879.2A4 4 0 0 1 883.2 41.3V43.8M883.2 51.6V54.2A4 4 0 0 1 879.2 58.2H876.4M868.8 58.2H866.2A4 4 0 0 1 862.2 54.2V51.6"/>
<rect x="867.1" y="42.1" width="11.4" height="11.3" rx="2.6"/>
</g>
<!-- play -->
<path d="M1232.2 38.3L1251 47.8L1232.2 57.9Z" stroke-width="1.8"/>
</svg>
</div>

</body></html>
